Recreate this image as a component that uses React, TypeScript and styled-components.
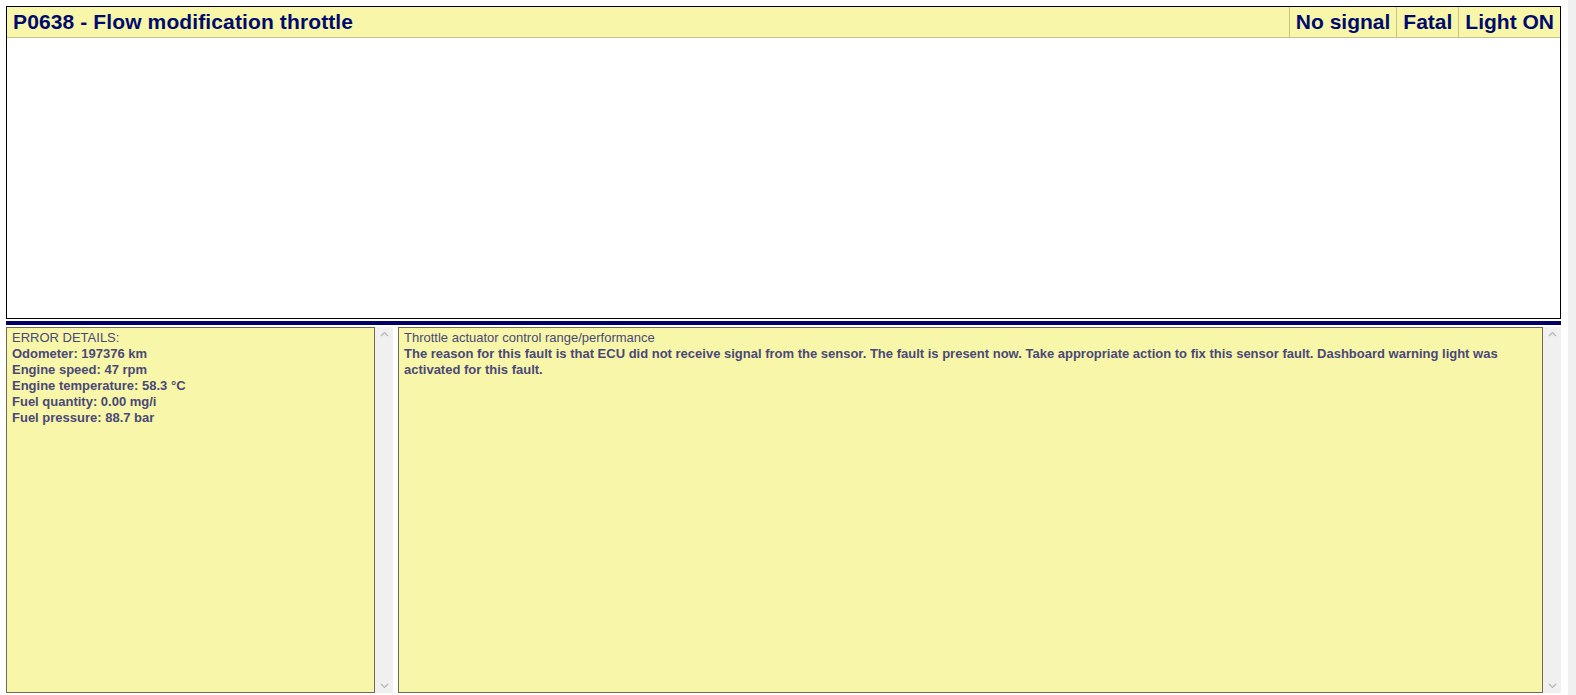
import React from 'react';
import styled, { createGlobalStyle } from 'styled-components';

const GlobalStyle = createGlobalStyle`
  html, body {
    margin: 0;
    padding: 0;
    background: #ffffff;
  }
  body {
    font-family: 'Liberation Sans', Arial, sans-serif;
  }
`;

const Page = styled.div`
  display: flex;
  width: 1576px;
  height: 695px;
  overflow: hidden;
`;

const Main = styled.div`
  display: flex;
  flex-direction: column;
  width: 1555px;
  padding: 6px 0 0 6px;
`;

const PageScroll = styled.div`
  margin-left: auto;
  width: 8px;
  background: #f0f0f0;
`;

const FaultBox = styled.div`
  display: flex;
  flex-direction: column;
  height: 311px;
  border: 1px solid #000000;
  background: #ffffff;
`;

const HeaderRow = styled.div`
  display: flex;
  height: 30px;
  background: #f8f7a9;
  border-bottom: 1px solid #c9c18a;
`;

const HeaderCell = styled.div<{ $grow?: boolean }>`
  display: flex;
  align-items: center;
  flex: ${({ $grow }) => ($grow ? '1' : '0 0 auto')};
  padding: 0 6px 0 6px;
  border-left: ${({ $grow }) => ($grow ? 'none' : '1px solid #c9c18a')};
  color: #000a6e;
  font-size: 21px;
  font-weight: bold;
  letter-spacing: ${({ $grow }) => ($grow ? '0.12px' : '0')};
  white-space: nowrap;
`;

const Divider = styled.div`
  height: 4px;
  margin: 2px 0 2px;
  background: #000066;
`;

const DetailRow = styled.div`
  display: flex;
  height: 366px;
`;

const Pane = styled.div<{ $width?: number }>`
  display: flex;
  flex: ${({ $width }) => ($width ? `0 0 ${$width}px` : '1')};
`;

const TextBox = styled.div`
  flex: 1;
  background: #f8f7a9;
  border: 1px solid #6d6b55;
  padding: 2px 5px;
  color: #4a4878;
  font-size: 13px;
  line-height: 16px;
  font-weight: bold;
  overflow: hidden;
`;

const Line = styled.div<{ $plain?: boolean }>`
  font-weight: ${({ $plain }) => ($plain ? 'normal' : 'bold')};
`;

const ScrollTrack = styled.div`
  display: flex;
  flex-direction: column;
  justify-content: space-between;
  align-items: center;
  width: 18px;
  padding: 4px 0 4px;
  background: #f0f0f0;
  color: #b4b4b4;
`;

const Gap = styled.div`
  width: 5px;
`;

function Chevron({ up }: { up?: boolean }) {
  return (
    <svg width="9" height="6" viewBox="0 0 9 6">
      <path
        d={up ? 'M1 5 L4.5 1.5 L8 5' : 'M1 1 L4.5 4.5 L8 1'}
        fill="none"
        stroke="currentColor"
        strokeWidth="1.2"
      />
    </svg>
  );
}

function Scroller() {
  return (
    <ScrollTrack>
      <Chevron up />
      <Chevron />
    </ScrollTrack>
  );
}

const details = [
  'Odometer: 197376 km',
  'Engine speed: 47 rpm',
  'Engine temperature: 58.3 °C',
  'Fuel quantity: 0.00 mg/i',
  'Fuel pressure: 88.7 bar',
];

export default function App() {
  return (
    <Page>
      <GlobalStyle />
      <Main>
        <FaultBox>
          <HeaderRow>
            <HeaderCell $grow>P0638 - Flow modification throttle</HeaderCell>
            <HeaderCell>No signal</HeaderCell>
            <HeaderCell>Fatal</HeaderCell>
            <HeaderCell>Light ON</HeaderCell>
          </HeaderRow>
        </FaultBox>
        <Divider />
        <DetailRow>
          <Pane $width={387}>
            <TextBox>
              <Line $plain>ERROR DETAILS:</Line>
              {details.map((d) => (
                <Line key={d}>{d}</Line>
              ))}
            </TextBox>
            <Scroller />
          </Pane>
          <Gap />
          <Pane>
            <TextBox>
              <Line $plain>Throttle actuator control range/performance</Line>
              <Line>
                The reason for this fault is that ECU did not receive signal from the sensor. The fault is
                present now. Take appropriate action to fix this sensor fault. Dashboard warning light was
                activated for this fault.
              </Line>
            </TextBox>
            <Scroller />
          </Pane>
        </DetailRow>
      </Main>
      <PageScroll />
    </Page>
  );
}
